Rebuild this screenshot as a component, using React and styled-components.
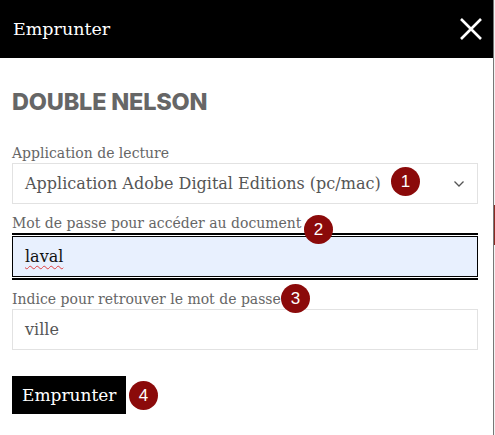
import React from "react";
import styled, { createGlobalStyle } from "styled-components";

const Global = createGlobalStyle`
  html, body { margin: 0; padding: 0; background: #fff; }
  * { box-sizing: border-box; }
`;

const serif = `"DejaVu Serif", "Liberation Serif", serif`;

const Page = styled.div`
  display: flex;
  width: 495px;
  height: 435px;
  overflow: hidden;
`;
const Modal = styled.div`
  flex: 0 0 494px;
  border-right: 1px solid #777;
  background: #fff;
  display: flex;
  flex-direction: column;
`;
const Backdrop = styled.div`
  flex: 1;
  background: #f2f2f2;
  padding-top: 205px;
`;
const BackdropMark = styled.div`
  height: 40px;
  background: #8a2a22;
`;
const Header = styled.div`
  height: 58px;
  background: #000;
  display: flex;
  align-items: center;
  justify-content: space-between;
  padding: 0 8px 0 13px;
`;
const HeaderTitle = styled.h2`
  margin: 0;
  font-family: ${serif};
  font-weight: normal;
  font-size: 17.5px;
  color: #fff;
`;
const Close = styled.button`
  background: none;
  border: 0;
  padding: 0;
  width: 28px;
  height: 28px;
  display: flex;
  align-items: center;
  justify-content: center;
`;
const Body = styled.div`
  padding: 31px 15px 0 12px;
`;
const Title = styled.h1`
  margin: 0 0 29px;
  font-family: Inter, Roboto, "Liberation Sans", sans-serif;
  font-weight: 800;
  font-size: 23.5px;
  line-height: 26px;
  letter-spacing: -0.2px;
  color: #666;
`;
const Field = styled.div`
  position: relative;
  margin-bottom: 10px;
`;
const Label = styled.label`
  display: block;
  font-family: ${serif};
  font-size: 14px;
  line-height: 18px;
  color: #666;
  margin-bottom: 1px;
`;
const Box = styled.div`
  height: 41px;
  border: 1px solid ${(p) => (p.focused ? "#000" : "#e2e2e2")};
  background: ${(p) => (p.focused ? "#e8f0fe" : "#fff")};
  display: flex;
  align-items: center;
  justify-content: space-between;
  padding: 0 12px;
  font-family: ${serif};
  font-size: 16px;
  color: ${(p) => (p.focused ? "#111" : "#555")};
`;
const FocusRing = styled.div`
  border-top: 2px solid #000;
  border-bottom: 2px solid #000;
  padding: 1px 0;
`;
const Squiggle = styled.span`
  text-decoration: underline wavy #e04040;
  text-decoration-thickness: 1px;
  text-underline-offset: 3px;
`;
const Button = styled.button`
  margin-top: 16px;
  height: 38px;
  padding: 0 10px;
  background: #000;
  color: #fff;
  border: 0;
  font-family: ${serif};
  font-size: 17px;
`;
const ButtonRow = styled.div`
  position: relative;
  display: inline-block;
`;
const Badge = styled.span`
  position: absolute;
  left: ${(p) => p.x}px;
  top: ${(p) => p.y}px;
  width: 29px;
  height: 29px;
  border-radius: 50%;
  background: #8b0a0a;
  color: #fff;
  font-family: "Liberation Sans", Arial, sans-serif;
  font-size: 17px;
  display: flex;
  align-items: center;
  justify-content: center;
`;

const Chevron = () => (
  <svg width="12" height="8" viewBox="0 0 12 8" fill="none">
    <path d="M1.5 1.5 L6 6 L10.5 1.5" stroke="#555" strokeWidth="1.3" />
  </svg>
);

export default function App() {
  return (
    <Page>
      <Global />
      <Modal>
        <Header>
          <HeaderTitle>Emprunter</HeaderTitle>
          <Close aria-label="Fermer">
            <svg width="24" height="24" viewBox="0 0 24 24">
              <path d="M2 2 L22 22 M22 2 L2 22" stroke="#fff" strokeWidth="2.6" />
            </svg>
          </Close>
        </Header>
        <Body>
          <Title>DOUBLE NELSON</Title>
          <Field>
            <Label>Application de lecture</Label>
            <Box>
              <span>Application Adobe Digital Editions (pc/mac)</span>
              <Chevron />
            </Box>
            <Badge x={379} y={23}>1</Badge>
          </Field>
          <Field>
            <Label>Mot de passe pour accéder au document</Label>
            <FocusRing>
              <Box focused>
                <Squiggle>laval</Squiggle>
              </Box>
            </FocusRing>
            <Badge x={292} y={1}>2</Badge>
          </Field>
          <Field>
            <Label>Indice pour retrouver le mot de passe</Label>
            <Box>ville</Box>
            <Badge x={269} y={-6}>3</Badge>
          </Field>
          <ButtonRow>
            <Button>Emprunter</Button>
            <Badge x={117} y={21}>4</Badge>
          </ButtonRow>
        </Body>
      </Modal>
      <Backdrop>
        <BackdropMark />
      </Backdrop>
    </Page>
  );
}
